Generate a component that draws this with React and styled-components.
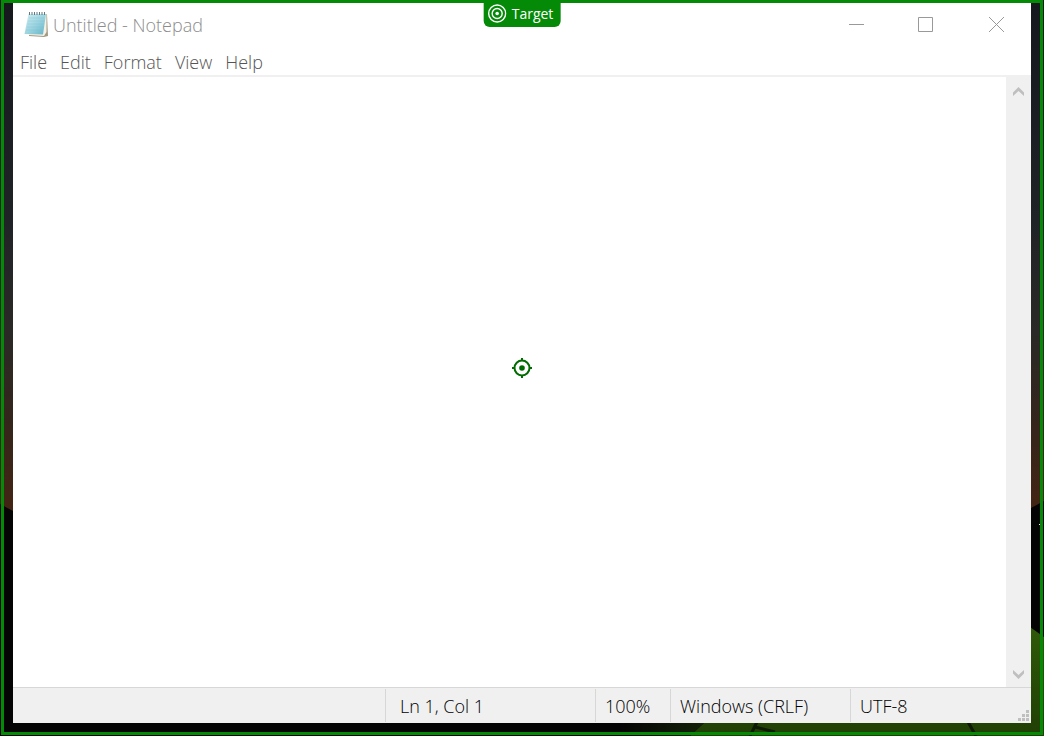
import React from "react";
import styled, { createGlobalStyle } from "styled-components";

const GlobalStyle = createGlobalStyle`
  *, *::before, *::after { box-sizing: border-box; }
  body { margin: 0; background: #000; font-family: "Open Sans", "Noto Sans", sans-serif; }
  button, textarea { font: inherit; border: 0; padding: 0; margin: 0; background: none; }
`;

const Desktop = styled.div`
  position: relative;
  min-height: 100vh;
  padding: 0 1px 1px;
  display: flex;
  background: #000;
`;

const Wallpaper = styled.svg`
  position: absolute;
  inset: 0;
  width: 100%;
  height: 100%;
`;

const TargetFrame = styled.div`
  position: relative;
  flex: 1;
  display: flex;
  border: 3px solid #058a08;
  padding: 0 9px 9px;
`;

const TargetTag = styled.div`
  position: absolute;
  top: -3px;
  left: 50%;
  transform: translateX(-50%);
  display: flex;
  align-items: center;
  gap: 5px;
  height: 27px;
  padding: 0 7px 0 4px;
  border-radius: 0 0 6px 6px;
  background: #058a08;
  color: #fff;
  font-size: 14px;
  line-height: 20px;
`;

const Crosshair = styled.svg`
  position: absolute;
  top: 50%;
  left: 50%;
  transform: translate(-50%, -50%);
`;

const Window = styled.main`
  flex: 1;
  min-width: 0;
  display: flex;
  flex-direction: column;
  background: #fff;
`;

const TitleBar = styled.header`
  display: flex;
  align-items: center;
  height: 44px;
  padding-left: 11px;
  color: #8c8c8c;
`;

const Title = styled.h1`
  flex: 1;
  margin: 0 0 0 5px;
  font-size: 18px;
  line-height: 24px;
  font-weight: 350;
`;

const CaptionButton = styled.button`
  width: 70px;
  height: 43px;
  align-self: flex-start;
  display: grid;
  place-items: center;
  color: #999;
`;

const MenuBar = styled.nav`
  display: flex;
  gap: 13px;
  height: 30px;
  padding: 0 7px;
  border-bottom: 2px solid #f0f0f0;
`;

const MenuItem = styled.button`
  padding-top: 2px;
  font-size: 18px;
  font-weight: 350;
  line-height: 24px;
  color: #555;
`;

const Body = styled.div`
  flex: 1;
  display: flex;
`;

const Editor = styled.textarea`
  flex: 1;
  min-width: 0;
  padding: 4px 6px;
  font-size: 18px;
  resize: none;
  outline: none;
`;

const ScrollBar = styled.div`
  width: 25px;
  padding-top: 1px;
  display: flex;
  flex-direction: column;
  justify-content: space-between;
  background: #f0f0f0;
`;

const ScrollButton = styled.button`
  height: 26px;
  display: grid;
  place-items: center;
  color: #bfbfbf;
`;

const StatusBar = styled.footer`
  display: flex;
  justify-content: flex-end;
  height: 36px;
  padding-top: 1px;
  border-top: 1px solid #d7d7d7;
  background: #f0f0f0;
`;

const StatusCell = styled.div`
  width: ${(p) => p.$width}px;
  height: 33px;
  padding-left: ${(p) => p.$inset || 9}px;
  border-left: 1px solid #d7d7d7;
  font-size: 18px;
  font-weight: 350;
  line-height: 34px;
  color: #000;
  white-space: nowrap;
`;

const LastCell = styled(StatusCell)`
  display: flex;
  justify-content: space-between;
`;

const Grip = styled.svg`
  align-self: flex-end;
  margin: 0 2px 1px 0;
`;

const NotepadIcon = () => (
  <svg width="24" height="26" viewBox="0 0 24 26" aria-hidden="true">
    <defs>
      <linearGradient id="page" x1="0" y1="0" x2="1" y2="1">
        <stop offset="0" stopColor="#d3eef3" />
        <stop offset="0.5" stopColor="#9ed5e1" />
        <stop offset="1" stopColor="#62b3c6" />
      </linearGradient>
    </defs>
    <path d="M5 3 23 2 24 24 20 25 5 24Z" fill="#a39a80" />
    <path d="M5 2H22.500V20L20 24 5 23Z" fill="#f4f2e6" />
    <path d="M4.500 2H22L19 22.500 0.500 22Z" fill="url(#page)" />
    <path d="M5 6H20M4 9H20M3.500 12H19M3 15H19M2 18H18" stroke="#75bdcc" strokeOpacity="0.300" />
    <path d="M5.500 0V3M8 0V3M10.500 0V3M13 0V3M15.500 0V3M18 0V3M20.500 0V3" stroke="#67777c" />
  </svg>
);

const menus = ["File", "Edit", "Format", "View", "Help"];

export default function App() {
  return (
    <Desktop>
      <GlobalStyle />
      <Wallpaper viewBox="0 0 1044 736" preserveAspectRatio="none" aria-hidden="true">
        <defs>
          <linearGradient id="sky" x1="0" y1="0" x2="0" y2="1">
            <stop offset="0" stopColor="#15191e" />
            <stop offset="0.300" stopColor="#202326" />
            <stop offset="0.450" stopColor="#2a2927" />
            <stop offset="0.580" stopColor="#35251b" />
            <stop offset="0.700" stopColor="#442413" />
          </linearGradient>
          <linearGradient id="leaf" x1="0" y1="0" x2="0" y2="1">
            <stop offset="0" stopColor="#2f5a08" />
            <stop offset="1" stopColor="#203f05" />
          </linearGradient>
          <linearGradient id="stem" x1="0" y1="0" x2="1" y2="0">
            <stop offset="0" stopColor="#040404" />
            <stop offset="1" stopColor="#142208" />
          </linearGradient>
        </defs>
        <rect width="1044" height="736" fill="url(#sky)" />
        <path d="M0 504 13 511 1031 508 1044 501V736H0Z" fill="#040404" />
        <path d="M1030 627 1044 637V736H690L705 722H1030Z" fill="url(#leaf)" />
        <path d="M620 736V722H705L690 736Z" fill="url(#stem)" />
        <path d="M757 722 750 736M755 727 775 732M968 722 976 736" stroke="#0c1a05" strokeWidth="3" />
        <rect x="1039" y="524" width="1" height="1" fill="#fff" />
      </Wallpaper>
      <TargetFrame>
        <Window>
          <TitleBar>
            <NotepadIcon />
            <Title>Untitled - Notepad</Title>
            <CaptionButton aria-label="Minimize">
              <svg width="15" height="15" stroke="currentColor"><path d="M0 7.500H15" /></svg>
            </CaptionButton>
            <CaptionButton aria-label="Maximize">
              <svg width="16" height="15" stroke="currentColor" fill="none"><path d="M.5.5H14.500V14.500H.5Z" /></svg>
            </CaptionButton>
            <CaptionButton aria-label="Close">
              <svg width="15" height="15" stroke="currentColor"><path d="M0 0 15 15M15 0 0 15" /></svg>
            </CaptionButton>
          </TitleBar>
          <MenuBar aria-label="Menu">
            {menus.map((m) => <MenuItem key={m}>{m}</MenuItem>)}
          </MenuBar>
          <Body>
            <Editor aria-label="Text editor" />
            <ScrollBar>
              <ScrollButton aria-label="Scroll up">
                <svg width="11" height="9" fill="currentColor"><path d="M0 5.500 5.500 0 11 5.500V9L5.500 4 0 9Z" /></svg>
              </ScrollButton>
              <ScrollButton aria-label="Scroll down">
                <svg width="11" height="9" fill="currentColor"><path d="M0 3.500 5.500 9 11 3.500V0L5.500 5 0 0Z" /></svg>
              </ScrollButton>
            </ScrollBar>
          </Body>
          <StatusBar>
            <StatusCell $width={210} $inset={14}>Ln 1, Col 1</StatusCell>
            <StatusCell $width={75}>100%</StatusCell>
            <StatusCell $width={180}>Windows (CRLF)</StatusCell>
            <LastCell $width={181}>
              UTF-8
              <Grip width="11" height="11" fill="#bfbfbf" aria-hidden="true">
                <path d="M8 0h3v3h-3zM4 4h3v3h-3zM8 4h3v3h-3zM0 8h3v3h-3zM4 8h3v3h-3zM8 8h3v3h-3z" />
              </Grip>
            </LastCell>
          </StatusBar>
        </Window>
        <TargetTag>
          <svg width="19" height="19" fill="none" stroke="#fff" aria-hidden="true">
            <circle cx="9.500" cy="9.500" r="8.500" strokeWidth="1.400" />
            <circle cx="9.500" cy="9.500" r="5" strokeWidth="1.400" />
            <circle cx="9.500" cy="9.500" r="1.800" fill="#fff" stroke="none" />
          </svg>
          Target
        </TargetTag>
      </TargetFrame>
      <Crosshair width="20" height="20" fill="none" stroke="#006b00" strokeWidth="2" aria-hidden="true">
        <circle cx="10" cy="10" r="7.500" />
        <circle cx="10" cy="10" r="2.800" fill="#006b00" stroke="none" />
        <path d="M10 0V3M10 17V20M0 10H3M17 10H20" />
      </Crosshair>
    </Desktop>
  );
}
